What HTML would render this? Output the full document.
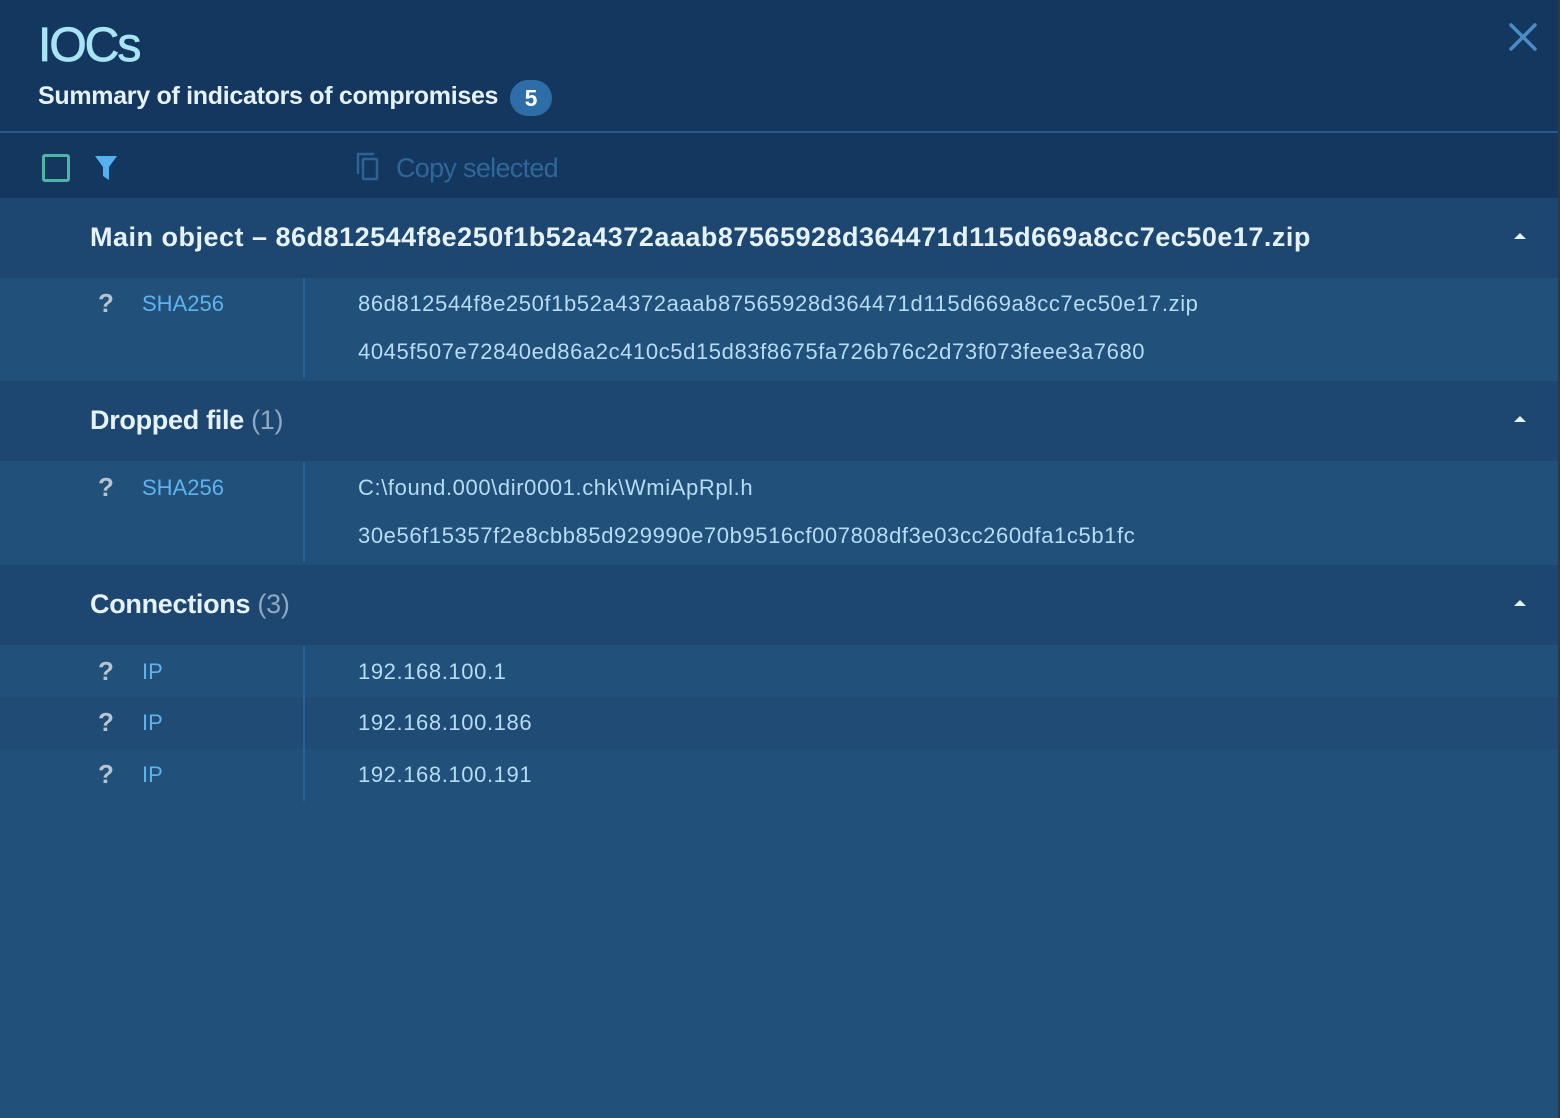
<!DOCTYPE html>
<html><head><meta charset="utf-8"><style>
*{margin:0;padding:0;box-sizing:border-box}
body{width:1560px;height:1118px;background:#21507a;font-family:"Liberation Sans",sans-serif;position:relative;overflow:hidden}
.abs{position:absolute}
.hdr{left:0;top:0;width:1560px;height:198px;background:#143760}
.line{left:0;top:131px;width:1560px;height:2px;background:#285984}
.sec{left:0;width:1560px;height:80px;background:#1d4670}
.sec .t{position:absolute;left:90px;top:24px;font-size:27px;font-weight:bold;color:#e6f2fb;letter-spacing:0.5px;white-space:nowrap}
.sec .t span{font-weight:normal;color:#90a8c0}
.sec .t.n{letter-spacing:-0.3px}
.caret{position:absolute;left:1514px;top:35px;width:0;height:0;border-left:6px solid transparent;border-right:6px solid transparent;border-bottom:6px solid #e6f2fb}
.row{left:0;width:1560px;background:#21507a}
.q{position:absolute;left:98px;font-size:26px;font-weight:bold;color:#b8c4d0}
.k{position:absolute;left:142px;font-size:22px;color:#5fb3ec}
.v{position:absolute;left:358px;font-size:22px;color:#b6dcf6;white-space:nowrap;letter-spacing:0.6px}
.div{left:303px;width:2px;background:#2a609a}
</style></head><body>
<div class="abs hdr"></div>
<div class="abs line"></div>
<div class="abs" style="left:38px;top:18px;font-size:48px;font-weight:normal;-webkit-text-stroke:0.8px #a8e4f4;color:#a8e4f4;letter-spacing:-2px">IOCs</div>
<div class="abs" style="left:38px;top:82px;font-size:25px;font-weight:bold;color:#e6f2fb;letter-spacing:-0.3px;white-space:nowrap">Summary of indicators of compromises</div>
<div class="abs" style="left:510px;top:80px;width:42px;height:36px;border-radius:18px;background:#2e6ea8;color:#fff;font-weight:bold;font-size:23px;text-align:center;line-height:36px">5</div>
<svg class="abs" style="left:1508px;top:22px" width="30" height="30" viewBox="0 0 30 30"><path d="M3 3L27 27M27 3L3 27" stroke="#4a8cc4" stroke-width="3.5" stroke-linecap="round"/></svg>
<div class="abs" style="left:42px;top:154px;width:28px;height:28px;border:3px solid #4fb5a4;border-radius:3px"></div>
<svg class="abs" style="left:94px;top:155px" width="24" height="26" viewBox="0 0 24 26"><path d="M1 1H23L15 12V25L9 21V12Z" fill="#56b0f0"/></svg>
<svg class="abs" style="left:356px;top:152px" width="26" height="30" viewBox="0 0 26 30"><path d="M2 22V2H18" fill="none" stroke="#2e6294" stroke-width="2.5"/><rect x="7" y="7" width="14" height="20" fill="none" stroke="#2e6294" stroke-width="2.5" rx="1"/></svg>
<div class="abs" style="left:396px;top:153px;font-size:27px;color:#2f6799;letter-spacing:-0.7px">Copy selected</div>

<div class="abs sec" style="top:198px"><div class="t">Main object – 86d812544f8e250f1b52a4372aaab87565928d364471d115d669a8cc7ec50e17.zip</div><div class="caret"></div></div>
<div class="abs row" style="top:278px;height:103px"><div class="q" style="top:10px">?</div><div class="k" style="top:13px">SHA256</div><div class="v" style="top:13px">86d812544f8e250f1b52a4372aaab87565928d364471d115d669a8cc7ec50e17.zip</div><div class="v" style="top:61px">4045f507e72840ed86a2c410c5d15d83f8675fa726b76c2d73f073feee3a7680</div></div>
<div class="abs div" style="top:278px;height:100px"></div>

<div class="abs sec" style="top:381px"><div class="t n">Dropped file <span>(1)</span></div><div class="caret"></div></div>
<div class="abs row" style="top:462px;height:103px"><div class="q" style="top:10px">?</div><div class="k" style="top:13px">SHA256</div><div class="v" style="top:13px">C:\found.000\dir0001.chk\WmiApRpl.h</div><div class="v" style="top:61px">30e56f15357f2e8cbb85d929990e70b9516cf007808df3e03cc260dfa1c5b1fc</div></div>
<div class="abs div" style="top:462px;height:100px"></div>

<div class="abs sec" style="top:565px"><div class="t n">Connections <span>(3)</span></div><div class="caret"></div></div>
<div class="abs row" style="top:646px;height:51px"><div class="q" style="top:10px">?</div><div class="k" style="top:13px">IP</div><div class="v" style="top:13px">192.168.100.1</div></div>
<div class="abs row" style="top:697px;height:52px;background:#1f4b75"><div class="q" style="top:10px">?</div><div class="k" style="top:13px">IP</div><div class="v" style="top:13px">192.168.100.186</div></div>
<div class="abs row" style="top:749px;height:52px"><div class="q" style="top:10px">?</div><div class="k" style="top:13px">IP</div><div class="v" style="top:13px">192.168.100.191</div></div>
<div class="abs div" style="top:646px;height:155px"></div>
<div class="abs" style="left:1558px;top:0;width:2px;height:1118px;background:#2a3a4c"></div>
</body></html>
